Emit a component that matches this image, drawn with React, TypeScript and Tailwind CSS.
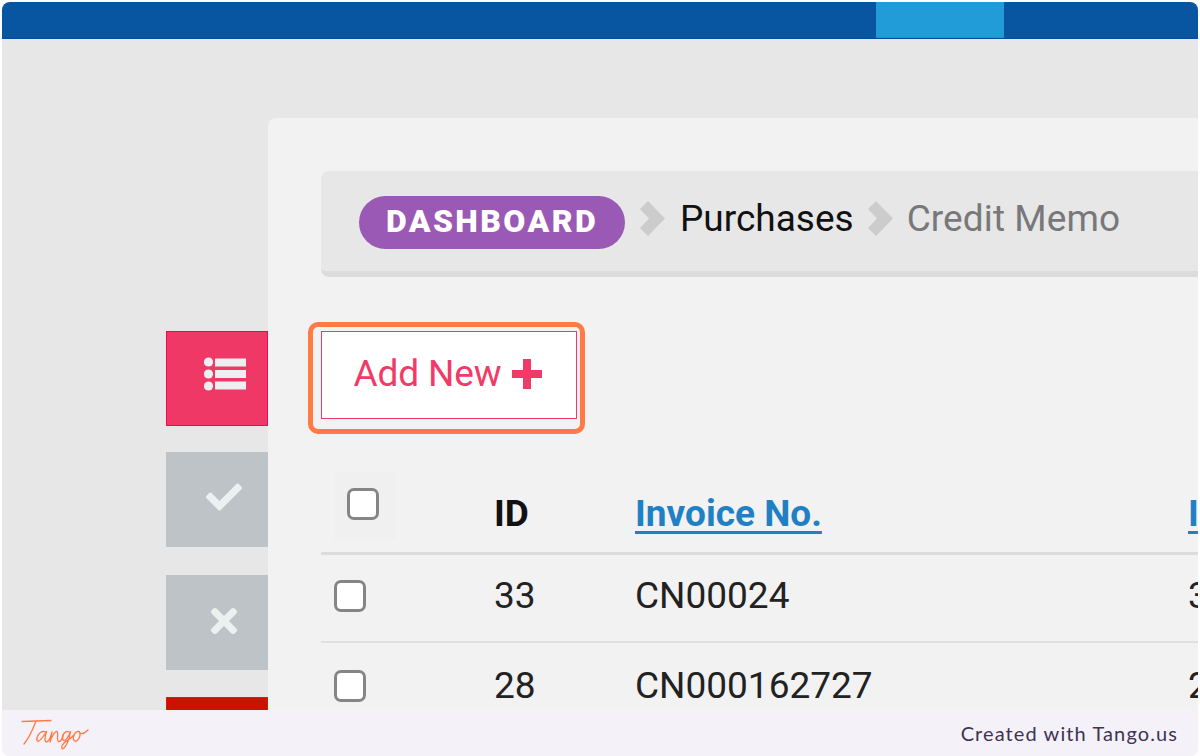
import { FaCheck, FaTimes } from "react-icons/fa";

const rows = [
  { id: "33", invoice: "CN00024", next: "3" },
  { id: "28", invoice: "CN000162727", next: "2" },
];

function Checkbox() {
  return <span className="block h-[32px] w-[32px] rounded-[7px] border-[3px] border-[#858585] bg-white" />;
}

function SideTab({ className, children }: { className: string; children?: React.ReactNode }) {
  return <div className={`flex h-[95px] w-[102px] shrink-0 items-center justify-center pl-[14px] ${className}`}>{children}</div>;
}

function ListIcon() {
  return (
    <svg className="ml-[2px]" width="42" height="34" viewBox="0 0 42 34" fill="#ecf0f1">
      <circle cx="4.5" cy="5" r="4.6" />
      <circle cx="4.5" cy="17" r="4.6" />
      <circle cx="4.5" cy="29" r="4.6" />
      <rect x="11" y="1.5" width="31" height="8" />
      <rect x="11" y="13" width="31" height="8" />
      <rect x="11" y="24.5" width="31" height="8" />
    </svg>
  );
}

function Chevron() {
  return (
    <svg className="mt-[-6px] shrink-0" width="25" height="35" viewBox="0 0 25 35" fill="#cccccc">
      <path d="M0 8 L8 0 L25 17.5 L8 35 L0 27 L9 17.5 Z" />
    </svg>
  );
}

function PlusIcon() {
  return (
    <svg width="30" height="30" viewBox="0 0 30 30" fill="#f23a68">
      <path d="M11 0 H19 V11 H30 V19 H19 V30 H11 V19 H0 V11 H11 Z" />
    </svg>
  );
}

function TangoLogo() {
  return (
    <svg width="70" height="34" viewBox="0 0 70 34" fill="none" stroke="#ff7a45" strokeWidth="1.3" strokeLinecap="round" strokeLinejoin="round">
      <path d="M2 5.5 L31 4.5" />
      <path d="M16 5 C13 13 9 22 4 28" />
      <path d="M26 16 C21 13.5 16 20 17 24.5 C18.5 27.5 23 21 26.5 15.5 C25 20 24 26 26.5 26 C29 25.5 31 20 32 16 C31.5 19.5 30.5 23 30 26 C31.5 21 35 15 37 15.5 C39 17 36 24 38.5 25.5 C40.5 26 42 23 43 20" />
      <path d="M49 16 C45 14 41 20 43 24 C45 26.5 49 20 50.5 15.5 C49.5 23 47 29 43.5 32.5 C41 34 41 30 44 27 C47 24 51 23 54 19" />
      <path d="M59 15.5 C55 15 52 21 54 24.5 C57 27 62 20 59 15.5 C60 18 63 19 68 14" />
    </svg>
  );
}

export default function App() {
  return (
    <div className="h-[756px] w-[1200px] overflow-hidden bg-white px-[2px] pt-[2px] font-['Roboto',sans-serif]">
      <div className="flex h-[754px] flex-col overflow-hidden rounded-[8px] bg-[#e7e7e7]">
        <header className="flex h-[37px] shrink-0 justify-end border-b border-[#004a9f] bg-[#0855a2] pr-[194px]">
          <div className="h-full w-[128px] border-b border-[#0a9ad8] bg-[#219cd9]" />
        </header>

        <div className="flex h-[671px] shrink-0 overflow-hidden pt-[79px]">
          <aside className="flex w-[266px] shrink-0 flex-col items-end gap-[27px] pt-[213px]">
            <SideTab className="mb-[-1px] border border-[#f5054f] bg-[#ef3866] pb-[9px]">
              <ListIcon />
            </SideTab>
            <SideTab className="mb-[1px] bg-[#bdc3c7] pb-[5px]">
              <FaCheck className="text-[#ecf0f1]" size={36} />
            </SideTab>
            <SideTab className="bg-[#bdc3c7] pb-[3px]">
              <FaTimes className="text-[#ecf0f1]" size={38} />
            </SideTab>
            <SideTab className="border border-[#dd1a00] bg-[#c91200]" />
          </aside>

          <main className="min-w-0 flex-1 rounded-tl-[8px] bg-[#f2f2f2] pl-[53px] pt-[53px]">
            <nav className="flex h-[106px] items-center rounded-l-[8px] border-b-[6px] border-[#dcdcdc] bg-[#e7e7e7] pl-[38px] text-[37px] leading-none">
              <span className="mt-[3px] flex h-[53px] w-[266px] items-center justify-center rounded-full bg-[#9b59b6] pb-[3px] text-[32px] font-black tracking-[2.4px] text-white">
                DASHBOARD
              </span>
              <span className="ml-[15px]">
                <Chevron />
              </span>
              <span className="mb-[5px] ml-[15px] text-[#111111]">Purchases</span>
              <span className="ml-[14px]">
                <Chevron />
              </span>
              <span className="mb-[5px] ml-[14px] tracking-[0.1px] text-[#77787a]">Credit Memo</span>
            </nav>

            <button className="relative mt-[54px] block h-[88px] w-[256px] border border-[#f23a68] bg-white pr-[2px] text-[37px] text-[#f23a68]">
              <span className="absolute -bottom-[16px] -left-[14px] -right-[9px] -top-[10px] rounded-[10px] border-[5px] border-[#ff7a45]" />
              <span className="flex items-center justify-center gap-[11px] pb-[2px] tracking-[-0.15px]">
                Add New
                <PlusIcon />
              </span>
            </button>

            <table className="mt-[53px] w-[900px] table-fixed border-collapse text-[37px] text-[#222222]">
              <thead>
                <tr className="h-[81px] border-b-[3px] border-[#dcdcdc]">
                  <th className="w-[173px] pb-[12px] pl-[13px] text-left">
                    <span className="flex h-[68px] w-[62px] items-center justify-center bg-[#f0f0f0] pb-[4px] pr-[4px]">
                      <Checkbox />
                    </span>
                  </th>
                  <th className="w-[141px] pt-[3px] text-left font-bold text-[#111111]">ID</th>
                  <th className="w-[553px] pt-[3px] text-left font-bold">
                    <a className="text-[#1f80c4] underline decoration-[3px] underline-offset-[5px]">Invoice No.</a>
                  </th>
                  <th className="overflow-hidden pt-[3px] text-left font-bold">
                    <a className="text-[#1f80c4] underline decoration-[3px] underline-offset-[5px]">I</a>
                  </th>
                </tr>
              </thead>
              <tbody>
                {rows.map((row) => (
                  <tr key={row.id} className="h-[88px] border-b-2 border-[#e0e0e0] [&:last-child>td]:pt-[5px]">
                    <td className="pb-[4px] pl-[13px]">
                      <Checkbox />
                    </td>
                    <td className="pb-[4px]">{row.id}</td>
                    <td className="pb-[4px]">{row.invoice}</td>
                    <td className="pb-[4px]">{row.next}</td>
                  </tr>
                ))}
              </tbody>
            </table>
          </main>
        </div>

        <footer className="flex h-[46px] shrink-0 items-center justify-between bg-[#f4f2f8] pl-[18px] pr-[20px]">
          <TangoLogo />
          <span className="font-['Lato',sans-serif] text-[20px] tracking-[1.1px] text-[#3f3252]">Created with Tango.us</span>
        </footer>
      </div>
    </div>
  );
}
